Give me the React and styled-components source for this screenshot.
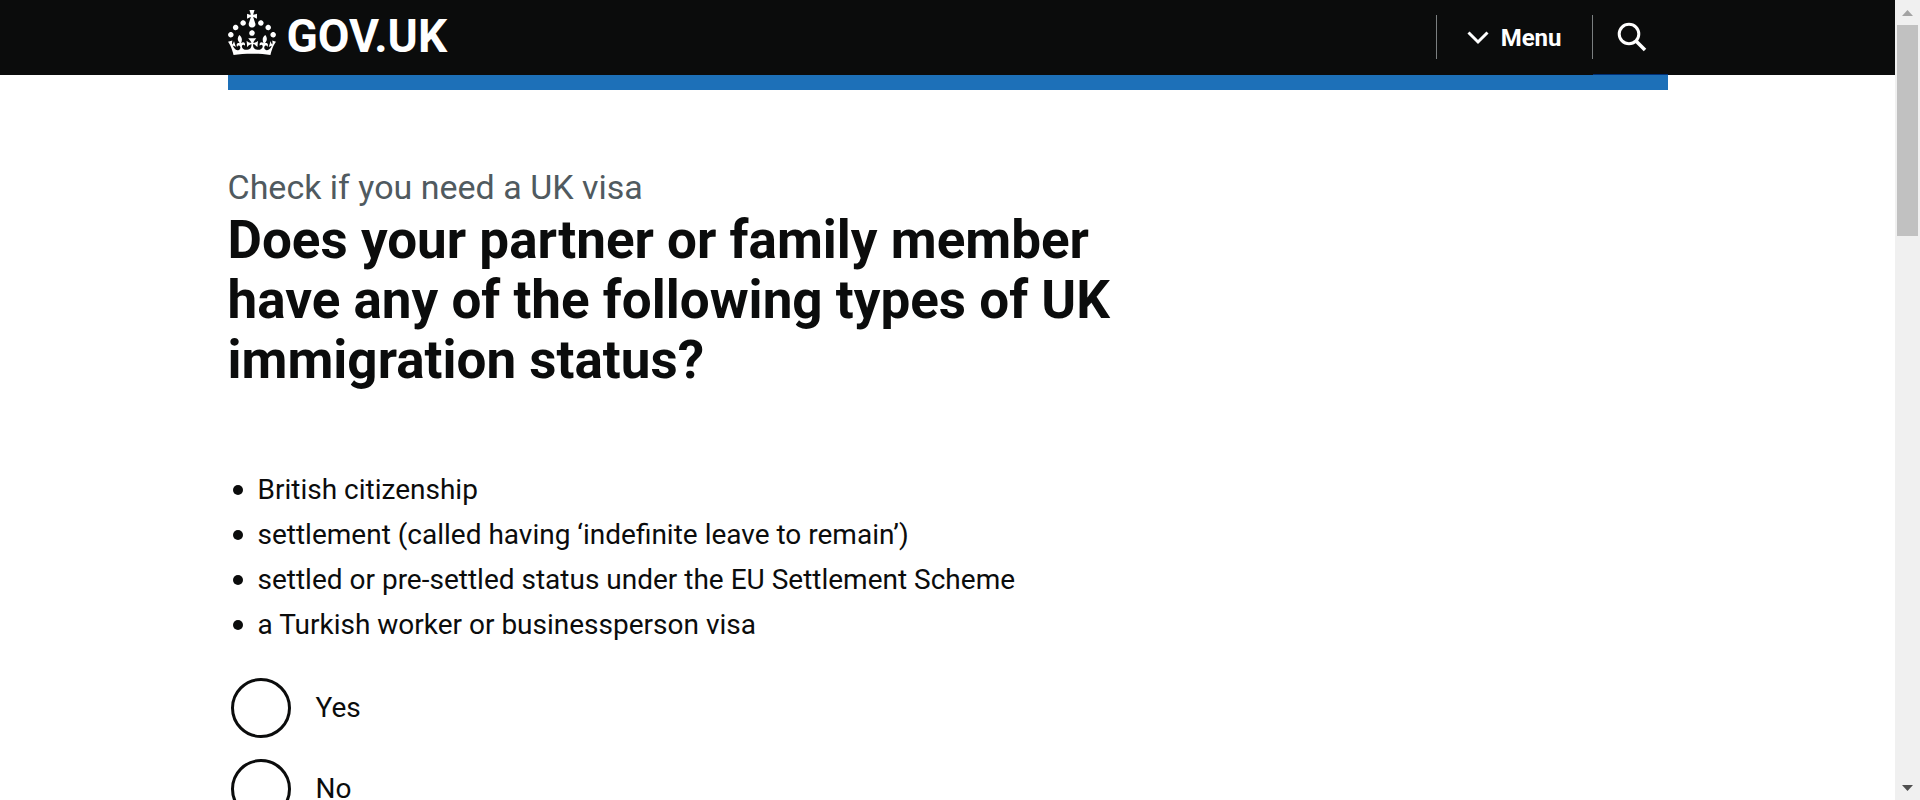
import React from 'react';
import styled, { createGlobalStyle } from 'styled-components';

const GlobalStyle = createGlobalStyle`
  *, *::before, *::after {
    box-sizing: border-box;
  }
  body {
    margin: 0;
    background: #ffffff;
    color: #0b0c0c;
    font-family: Roboto, 'Liberation Sans', Arial, sans-serif;
    font-size: 28px;
    line-height: 40px;
  }
`;

const Viewport = styled.div`
  display: flex;
  height: 100vh;
  overflow: hidden;
`;

const Page = styled.div`
  flex: 1;
  min-width: 0;
  overflow: hidden;
`;

const Container = styled.div`
  max-width: 1440px;
  margin: 0 auto;
`;

const Header = styled.header`
  background: #0b0c0c;
  color: #ffffff;
`;

const HeaderRow = styled(Container)`
  display: flex;
  justify-content: space-between;
  height: 75px;
`;

const HomeLink = styled.a`
  display: flex;
  align-items: flex-start;
  gap: 11px;
  padding-top: 10px;
  color: inherit;
  text-decoration: none;
`;

const Crown = styled.svg`
  width: 48px;
  height: 45px;
  fill: currentColor;
`;

const Wordmark = styled.span`
  font-size: 46px;
  line-height: 52px;
  font-weight: 700;
`;

const Nav = styled.nav`
  display: flex;
`;

const Divider = styled.span`
  width: 1px;
  height: 44px;
  margin-top: 15px;
  background: #7b7f80;
`;

const HeaderButton = styled.button`
  display: flex;
  align-items: center;
  gap: 12px;
  height: 75px;
  padding: 0 30px;
  border: 0;
  background: transparent;
  color: inherit;
  font: inherit;
  font-size: 24px;
  font-weight: 700;
  cursor: pointer;
`;

const SearchButton = styled(HeaderButton)`
  width: 75px;
  padding: 0 21px 0 24px;
  border-bottom: 1px solid #003078;
`;

const Icon = styled.svg`
  flex: none;
  fill: none;
  stroke: currentColor;
`;

const BlueBar = styled(Container)`
  height: 15px;
  background: #1d70b8;
`;

const Main = styled(Container).attrs({ as: 'main' })`
  padding: 77px 0 60px;
`;

const Column = styled.div`
  max-width: 930px;
`;

const Caption = styled.span`
  display: block;
  margin-bottom: 3px;
  color: #505a5f;
  font-size: 34px;
  font-weight: 400;
  line-height: 40px;
`;

const Title = styled.h1`
  margin: 0 0 80px;
  font-size: 53px;
  font-weight: 700;
  line-height: 60px;
`;

const StatusList = styled.ul`
  margin: 0 0 25px;
  padding: 0;
  list-style: none;
`;

const StatusItem = styled.li`
  display: flex;
  align-items: center;
  gap: 15px;
  padding-left: 5px;

  & + & {
    margin-top: 5px;
  }

  &::before {
    content: '';
    flex: none;
    width: 10px;
    height: 10px;
    border-radius: 50%;
    background: #0b0c0c;
  }
`;

const Choices = styled.fieldset`
  display: grid;
  gap: 15px;
  margin: 0;
  padding: 5px 0 0;
  border: 0;
`;

const Choice = styled.label`
  display: flex;
  align-items: center;
  gap: 25px;
  justify-self: start;
  height: 66px;
  padding: 0 3px;
  cursor: pointer;
`;

const Radio = styled.input`
  appearance: none;
  width: 60px;
  height: 60px;
  margin: 0;
  border: 3px solid #0b0c0c;
  border-radius: 50%;
  background: #ffffff;

  &:checked {
    background: radial-gradient(circle, #0b0c0c 15px, #ffffff 16px);
  }
`;

const ScrollTrack = styled.aside`
  display: flex;
  flex-direction: column;
  flex: none;
  width: 25px;
  padding: 0 2px;
  background: #f0f0f0;
`;

const ScrollArrow = styled.button`
  display: grid;
  place-items: center;
  height: 25px;
  padding: 0;
  border: 0;
  background: transparent;
  color: ${(p) => (p.$disabled ? '#a3a3a3' : '#505050')};

  &:last-child {
    margin-top: auto;
  }

  svg {
    fill: currentColor;
  }
`;

const ScrollThumb = styled.div`
  width: 21px;
  height: 211px;
  background: #c1c1c1;
`;

const statuses = [
  'British citizenship',
  'settlement (called having ‘indefinite leave to remain’)',
  'settled or pre-settled status under the EU Settlement Scheme',
  'a Turkish worker or businessperson visa',
];

const answers = ['Yes', 'No'];

export default function App() {
  return (
    <>
      <GlobalStyle />
      <Viewport>
        <Page>
          <Header>
            <HeaderRow>
              <HomeLink href="#home">
                <Crown viewBox="0 0 32 30" aria-hidden="true">
                  <path d="M22.6 10.4c-1 .4-2-.1-2.4-1-.4-.9.1-2 1-2.4.9-.4 2 .1 2.4 1s-.1 2-1 2.4m-5.9 6.7c-.9.4-2-.1-2.4-1-.4-.9.1-2 1-2.4.9-.4 2 .1 2.4 1s-.1 2-1 2.4m10.8-3.7c-1 .4-2-.1-2.4-1-.4-.9.1-2 1-2.4.9-.4 2 .1 2.4 1s0 2-1 2.4m3.3 4.8c-1 .4-2-.1-2.4-1-.4-.9.1-2 1-2.4.9-.4 2 .1 2.4 1s-.1 2-1 2.4M17 4.7l2.3 1.2V2.5l-2.3.7-.2-.2.9-3h-3.4l.9 3-.2.2c-.1.1-2.3-.7-2.3-.7v3.4L15 4.7c.1.1.1.2.2.2l-1.3 4c-.1.2-.1.4-.1.6 0 1.1.8 2 1.9 2.2h.7c1-.2 1.9-1.1 1.9-2.1 0-.2 0-.4-.1-.6l-1.3-4c-.1-.2 0-.2.1-.3m-7.6 5.7c.9.4 2-.1 2.4-1 .4-.9-.1-2-1-2.4-.9-.4-2 .1-2.4 1s0 2 1 2.4m-5 3c.9.4 2-.1 2.4-1 .4-.9-.1-2-1-2.4-.9-.4-2 .1-2.4 1s.1 2 1 2.4m-3.2 4.8c.9.4 2-.1 2.4-1 .4-.9-.1-2-1-2.4-.9-.4-2 .1-2.4 1s0 2 1 2.4m14.8 11c4.4 0 8.6.3 12.3.8 1.1-4.5 2.4-7 3.7-8.8l-2.5-.9c.2 1.3.3 1.9 0 2.7-.4-.4-.8-1.1-1.1-2.3l-1.2 4c.7-.5 1.3-.8 2-.9-1.1 2.5-2.6 3.1-3.5 3-1.1-.2-1.7-1.2-1.5-2.1.3-1.2 1.5-1.5 2.1-.1 1.1-2.3-.8-3-2-2.3 1.9-1.9 2.1-3.5.6-5.6-2.1 1.6-2.1 3.2-1.2 5.5-1.2-1.4-3.2-.6-2.5 1.6.9-1.4 2.1-.5 1.9.8-.2 1.1-1.7 2.1-3.5 1.9-2.7-.2-2.9-2.1-2.9-3.6.7-.1 1.9.5 2.9 1.9l.4-4.3c-1.1 1.1-2.1 1.4-3.2 1.4.4-1.2 2.1-3 2.1-3h-5.4s1.7 1.9 2.1 3c-1.1 0-2.1-.2-3.2-1.4l.4 4.3c1-1.4 2.2-2 2.9-1.9-.1 1.5-.2 3.4-2.9 3.6-1.9.2-3.4-.8-3.5-1.9-.2-1.3 1-2.2 1.9-.8.7-2.3-1.2-3-2.5-1.6.9-2.2.9-3.9-1.2-5.5-1.5 2-1.3 3.7.6 5.6-1.2-.7-3.1 0-2 2.3.6-1.4 1.8-1.1 2.1.1.2.9-.3 1.9-1.5 2.1-.9.2-2.4-.5-3.5-3 .6 0 1.2.3 2 .9l-1.2-4c-.3 1.1-.7 1.9-1.1 2.3-.3-.8-.2-1.4 0-2.7l-2.9.9C1.3 23 2.6 25.5 3.7 30c3.7-.5 7.9-.8 12.3-.8" />
                </Crown>
                <Wordmark>GOV.UK</Wordmark>
              </HomeLink>
              <Nav aria-label="Site">
                <Divider />
                <HeaderButton type="button">
                  <Icon width="22" height="14" viewBox="0 0 22 14" strokeWidth="3" aria-hidden="true">
                    <path d="M1.5 1.5 11 11l9.500-9.500" />
                  </Icon>
                  Menu
                </HeaderButton>
                <Divider />
                <SearchButton type="button" aria-label="Search GOV.UK">
                  <Icon width="30" height="30" viewBox="0 0 30 30" strokeWidth="3" aria-hidden="true">
                    <circle cx="12" cy="12" r="9.800" />
                    <path d="m19 19 9 9" strokeWidth="3.500" />
                  </Icon>
                </SearchButton>
              </Nav>
            </HeaderRow>
          </Header>
          <BlueBar />
          <Main>
            <Column>
              <Caption>Check if you need a UK visa</Caption>
              <Title id="question">
                Does your partner or family member have any of the following types of UK immigration status?
              </Title>
              <StatusList>
                {statuses.map((status) => (
                  <StatusItem key={status}>{status}</StatusItem>
                ))}
              </StatusList>
              <Choices aria-labelledby="question">
                {answers.map((answer) => (
                  <Choice key={answer}>
                    <Radio type="radio" name="status" value={answer} />
                    {answer}
                  </Choice>
                ))}
              </Choices>
            </Column>
          </Main>
        </Page>
        <ScrollTrack aria-label="Page scroll">
          <ScrollArrow type="button" $disabled aria-label="Scroll up">
            <svg width="11" height="6" viewBox="0 0 11 6"><path d="M0 6 5.500 0 11 6z" /></svg>
          </ScrollArrow>
          <ScrollThumb />
          <ScrollArrow type="button" aria-label="Scroll down">
            <svg width="11" height="6" viewBox="0 0 11 6"><path d="M0 0 5.500 6 11 0z" /></svg>
          </ScrollArrow>
        </ScrollTrack>
      </Viewport>
    </>
  );
}
